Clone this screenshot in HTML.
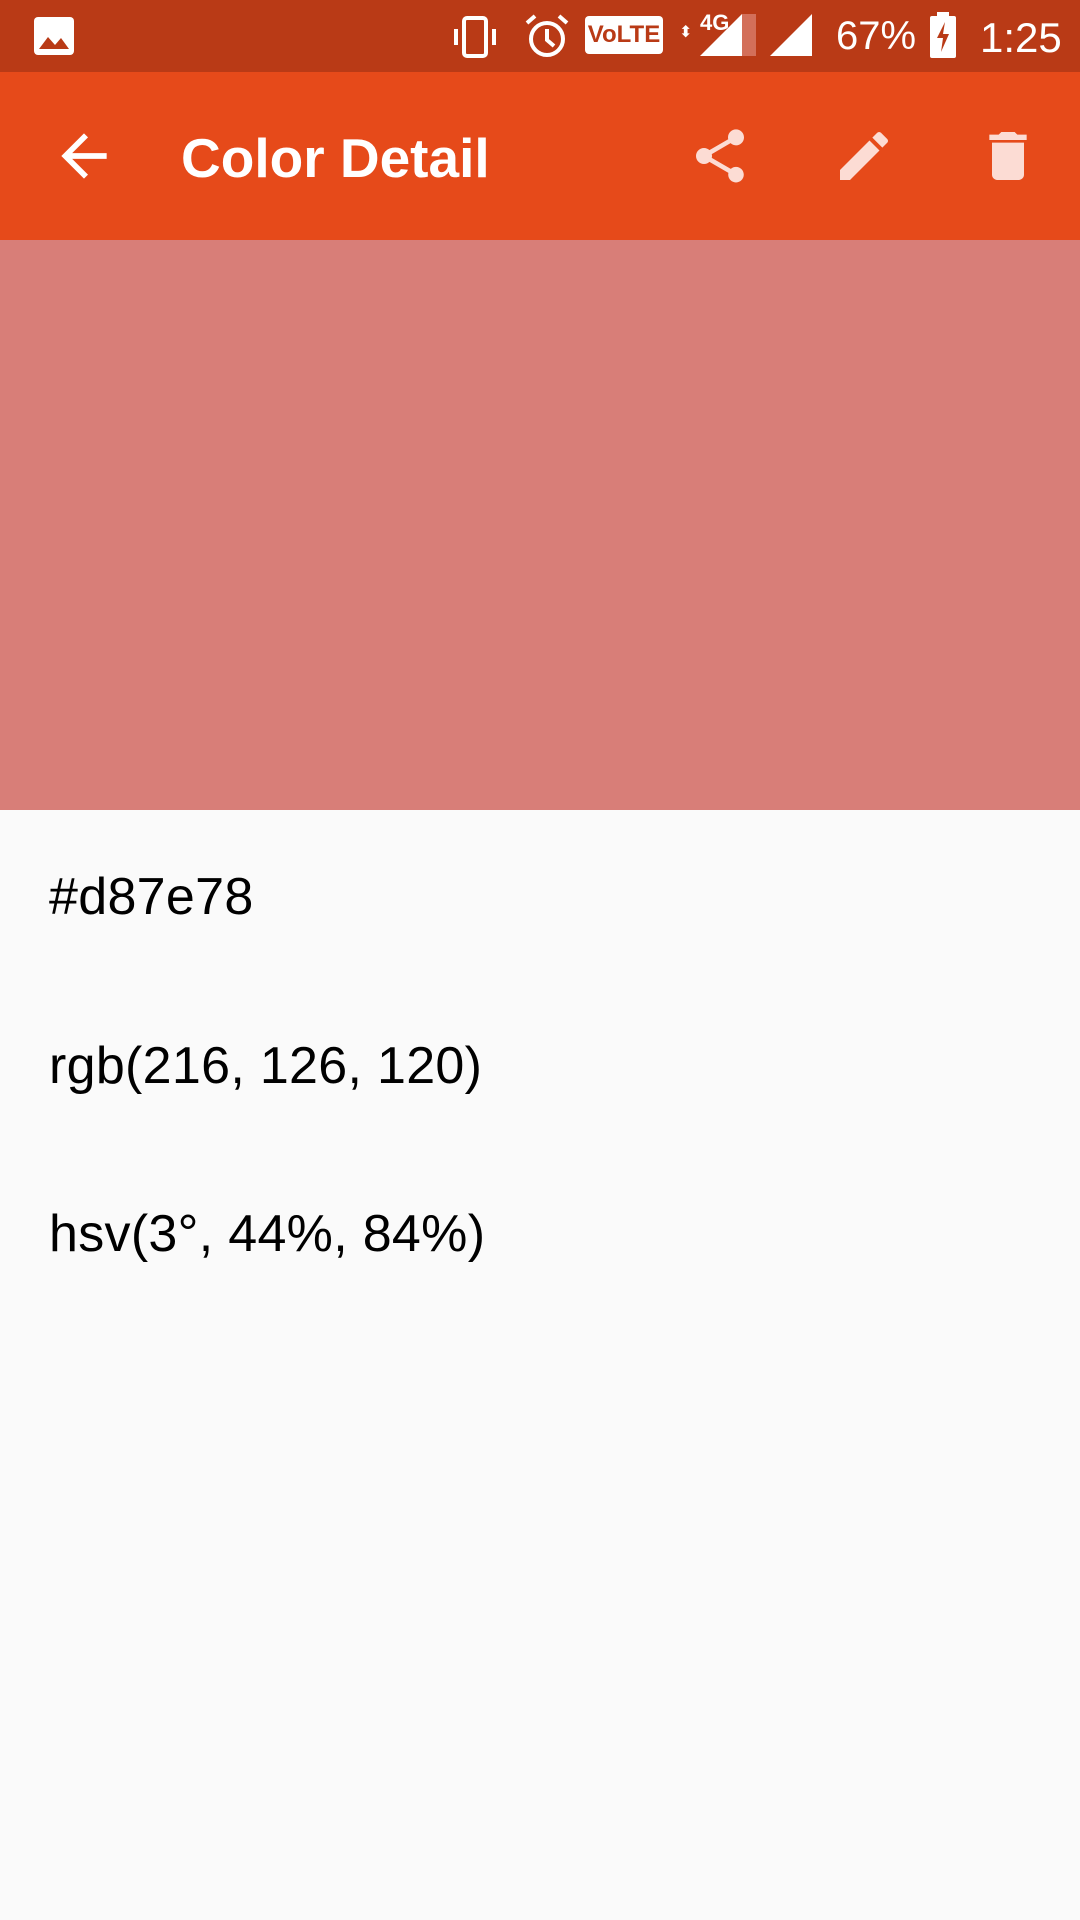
<!DOCTYPE html>
<html><head><meta charset="utf-8"><style>
body{margin:0;width:1080px;height:1920px;background:#fafafa;font-family:"Liberation Sans",Roboto,sans-serif;overflow:hidden;position:relative}
.sb{position:absolute;left:0;top:0;width:1080px;height:72px;background:#b93a16;color:#fff}
.tb{position:absolute;left:0;top:72px;width:1080px;height:168px;background:#e64a1a}
.blk{position:absolute;left:0;top:240px;width:1080px;height:570px;background:#d87e78}
.t{position:absolute;left:49px;font-size:52px;letter-spacing:0.3px;color:#000}
</style></head><body>
<div class="sb">
<svg style="position:absolute;left:34px;top:17px" width="40" height="38" viewBox="0 0 40 38"><rect x="0" y="0" width="40" height="38" rx="4" fill="#fff"/><path d="M5 32 L14 20 L21 28 L27 21 L35 32Z" fill="#b93a16"/></svg>
<svg style="position:absolute;left:450px;top:16px" width="52" height="42" viewBox="0 0 52 42"><rect x="14" y="2" width="22" height="38" rx="3" fill="none" stroke="#fff" stroke-width="4"/><rect x="4" y="13" width="4" height="16" fill="#fff"/><rect x="42" y="13" width="4" height="16" fill="#fff"/></svg>
<svg style="position:absolute;left:524px;top:13px" width="46" height="46" viewBox="0 0 46 46"><circle cx="23" cy="26" r="16" fill="none" stroke="#fff" stroke-width="4"/><path d="M23 16v11l7 6" fill="none" stroke="#fff" stroke-width="4"/><path d="M3 10l8-7M43 10l-8-7" stroke="#fff" stroke-width="4"/></svg>
<div style="position:absolute;left:585px;top:16px;width:78px;height:38px;background:#fff;border-radius:4px;color:#b93a16;font-weight:bold;font-size:24px;line-height:38px;text-align:center">VoLTE</div>
<div style="position:absolute;left:679px;top:22px;font-size:16px">⬍</div>
<div style="position:absolute;left:700px;top:10px;font-size:22px;font-weight:bold">4G</div>
<svg style="position:absolute;left:700px;top:14px" width="56" height="42"><path d="M0 42L42 0V42Z" fill="#fff"/><path d="M42 0L56 -4V42H42Z" fill="#d36f59"/></svg>
<svg style="position:absolute;left:770px;top:14px" width="42" height="42"><path d="M0 42L42 0V42Z" fill="#fff"/></svg>
<div style="position:absolute;left:836px;top:14px;font-size:40px">67%</div>
<svg style="position:absolute;left:930px;top:12px" width="26" height="46"><rect x="7" y="0" width="12" height="4" fill="#fff"/><rect x="0" y="4" width="26" height="42" rx="2" fill="#fff"/><path d="M15 10L7 26h6l-2 14 8-18h-6z" fill="#b93a16"/></svg>
<div style="position:absolute;left:980px;top:14px;font-size:42px">1:25</div>
</div>
<div class="tb">
<svg style="position:absolute;left:50px;top:50px" width="68" height="68" viewBox="0 0 24 24"><path d="M20 11H7.83l5.59-5.59L12 4l-8 8 8 8 1.41-1.41L7.83 13H20v-2z" fill="#fff"/></svg>
<div style="position:absolute;left:181px;top:54px;font-size:55px;font-weight:bold;color:#fff">Color Detail</div>
<svg style="position:absolute;left:688px;top:52px" width="64" height="64" viewBox="0 0 24 24"><path fill="#fcdcd4" d="M18 16.08c-.76 0-1.44.3-1.96.77L8.91 12.7c.05-.23.09-.46.09-.7s-.04-.47-.09-.7l7.05-4.11c.54.5 1.25.81 2.04.81 1.66 0 3-1.34 3-3s-1.34-3-3-3-3 1.34-3 3c0 .24.04.47.09.7L8.04 9.81C7.5 9.31 6.79 9 6 9c-1.66 0-3 1.34-3 3s1.34 3 3 3c.79 0 1.5-.31 2.04-.81l7.12 4.16c-.05.21-.08.43-.08.65 0 1.61 1.31 2.92 2.92 2.920s2.92-1.31 2.92-2.92-1.31-2.92-2.92-2.92z"/></svg>
<svg style="position:absolute;left:832px;top:52px" width="64" height="64" viewBox="0 0 24 24"><path fill="#fcdcd4" d="M3 17.25V21h3.75L17.81 9.94l-3.75-3.75L3 17.25zM20.71 7.04a1 1 0 000-1.41l-2.34-2.34a1 1 0 00-1.41 0l-1.83 1.83 3.75 3.75 1.83-1.83z"/></svg>
<svg style="position:absolute;left:976px;top:52px" width="64" height="64" viewBox="0 0 24 24"><path fill="#fcdcd4" d="M6 19c0 1.1.9 2 2 2h8c1.1 0 2-.9 2-2V7H6v12zM19 4h-3.5l-1-1h-5l-1 1H5v2h14V4z"/></svg>
</div>
<div class="blk"></div>
<div class="t" style="top:867px">#d87e78</div>
<div class="t" style="top:1036px">rgb(216, 126, 120)</div>
<div class="t" style="top:1204px">hsv(3°, 44%, 84%)</div>
</body></html>
